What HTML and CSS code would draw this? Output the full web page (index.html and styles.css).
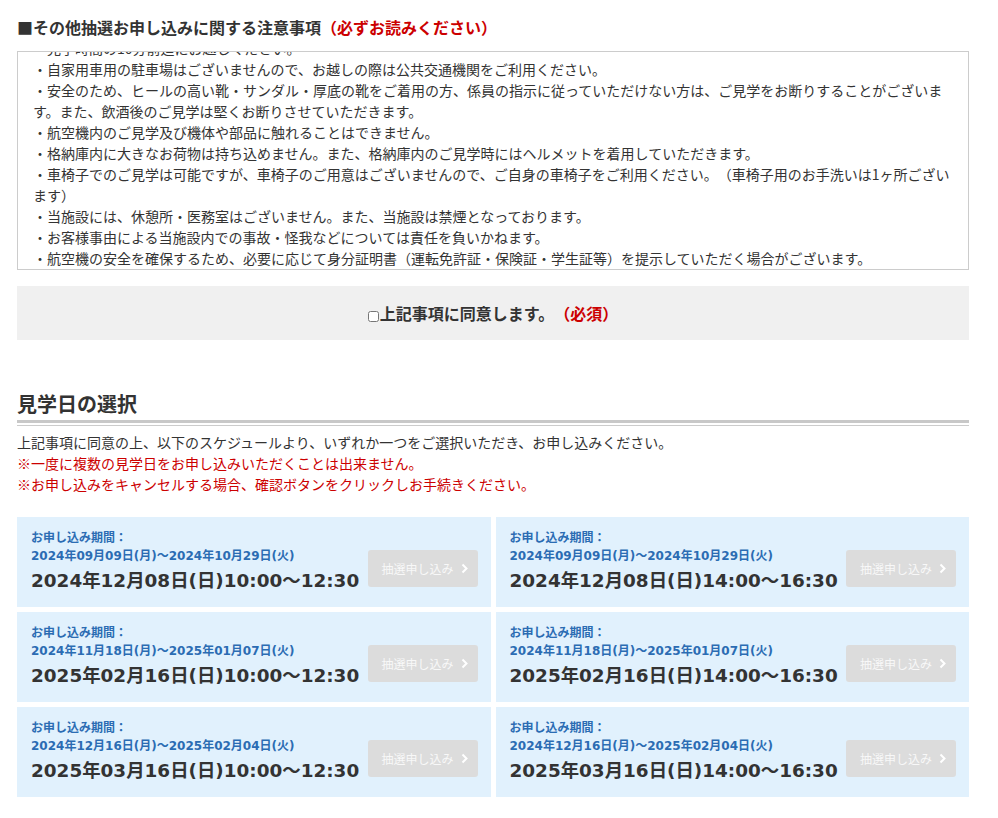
FILE: index.html
```html
<!DOCTYPE html>
<html lang="ja">
<head>
  <meta charset="UTF-8">
  <meta name="viewport" content="width=device-width, initial-scale=1">
  <title>見学日の選択</title>
  <link rel="stylesheet" href="styles.css">
</head>
<body>
  <div class="wrap">
    <h3 class="notice-title">■その他抽選お申し込みに関する注意事項<span class="red">（必ずお読みください）</span></h3>
    <div class="notice-box" id="noticeBox">
      <p>・見学時間の10分前迄にお越しください。</p>
      <p>・自家用車用の駐車場はございませんので、お越しの際は公共交通機関をご利用ください。</p>
      <p>・安全のため、ヒールの高い靴・サンダル・厚底の靴をご着用の方、係員の指示に従っていただけない方は、ご見学をお断りすることがございます。また、飲酒後のご見学は堅くお断りさせていただきます。</p>
      <p>・航空機内のご見学及び機体や部品に触れることはできません。</p>
      <p>・格納庫内に大きなお荷物は持ち込めません。また、格納庫内のご見学時にはヘルメットを着用していただきます。</p>
      <p>・車椅子でのご見学は可能ですが、車椅子のご用意はございませんので、ご自身の車椅子をご利用ください。（車椅子用のお手洗いは1ヶ所ございます）</p>
      <p>・当施設には、休憩所・医務室はございません。また、当施設は禁煙となっております。</p>
      <p>・お客様事由による当施設内での事故・怪我などについては責任を負いかねます。</p>
      <p>・航空機の安全を確保するため、必要に応じて身分証明書（運転免許証・保険証・学生証等）を提示していただく場合がございます。</p>
    </div>

    <div class="agree">
      <label><input type="checkbox" class="agree-check">上記事項に同意します。<span class="red">（必須）</span></label>
    </div>

    <div class="sec-head">
      <h2>見学日の選択</h2>
    </div>
    <p class="lead">
      上記事項に同意の上、以下のスケジュールより、いずれか一つをご選択いただき、お申し込みください。<br>
      <span class="red">※一度に複数の見学日をお申し込みいただくことは出来ません。</span><br>
      <span class="red">※お申し込みをキャンセルする場合、確認ボタンをクリックしお手続きください。</span>
    </p>

    <div class="schedule">
      <div class="card">
        <div class="card-info">
          <div class="period">お申し込み期間：</div>
          <div class="period">2024年09月09日(月)〜2024年10月29日(火)</div>
          <div class="date">2024年12月08日(日)10:00〜12:30</div>
        </div>
        <span class="btn-apply">抽選申し込み<svg width="7" height="11" viewBox="0 0 7 11"><polyline points="1.5,1.5 5.5,5.5 1.5,9.5" fill="none" stroke="#fff" stroke-width="2"/></svg></span>
      </div>
      <div class="card">
        <div class="card-info">
          <div class="period">お申し込み期間：</div>
          <div class="period">2024年09月09日(月)〜2024年10月29日(火)</div>
          <div class="date">2024年12月08日(日)14:00〜16:30</div>
        </div>
        <span class="btn-apply">抽選申し込み<svg width="7" height="11" viewBox="0 0 7 11"><polyline points="1.5,1.5 5.5,5.5 1.5,9.5" fill="none" stroke="#fff" stroke-width="2"/></svg></span>
      </div>
      <div class="card">
        <div class="card-info">
          <div class="period">お申し込み期間：</div>
          <div class="period">2024年11月18日(月)〜2025年01月07日(火)</div>
          <div class="date">2025年02月16日(日)10:00〜12:30</div>
        </div>
        <span class="btn-apply">抽選申し込み<svg width="7" height="11" viewBox="0 0 7 11"><polyline points="1.5,1.5 5.5,5.5 1.5,9.5" fill="none" stroke="#fff" stroke-width="2"/></svg></span>
      </div>
      <div class="card">
        <div class="card-info">
          <div class="period">お申し込み期間：</div>
          <div class="period">2024年11月18日(月)〜2025年01月07日(火)</div>
          <div class="date">2025年02月16日(日)14:00〜16:30</div>
        </div>
        <span class="btn-apply">抽選申し込み<svg width="7" height="11" viewBox="0 0 7 11"><polyline points="1.5,1.5 5.5,5.5 1.5,9.5" fill="none" stroke="#fff" stroke-width="2"/></svg></span>
      </div>
      <div class="card">
        <div class="card-info">
          <div class="period">お申し込み期間：</div>
          <div class="period">2024年12月16日(月)〜2025年02月04日(火)</div>
          <div class="date">2025年03月16日(日)10:00〜12:30</div>
        </div>
        <span class="btn-apply">抽選申し込み<svg width="7" height="11" viewBox="0 0 7 11"><polyline points="1.5,1.5 5.5,5.5 1.5,9.5" fill="none" stroke="#fff" stroke-width="2"/></svg></span>
      </div>
      <div class="card">
        <div class="card-info">
          <div class="period">お申し込み期間：</div>
          <div class="period">2024年12月16日(月)〜2025年02月04日(火)</div>
          <div class="date">2025年03月16日(日)14:00〜16:30</div>
        </div>
        <span class="btn-apply">抽選申し込み<svg width="7" height="11" viewBox="0 0 7 11"><polyline points="1.5,1.5 5.5,5.5 1.5,9.5" fill="none" stroke="#fff" stroke-width="2"/></svg></span>
      </div>
    </div>
  </div>

  <script>
    // 注意事項ボックスは少しスクロールした状態で表示
    document.getElementById('noticeBox').scrollTop = 24;
  </script>
</body>
</html>
```

FILE: styles.css
```css
body {
  font-family: "DejaVu Sans", "Noto Sans CJK JP", sans-serif;
  margin: 0;
  background-color: #fff;
  color: #333;
  text-spacing-trim: space-all;
}

.wrap {
  width: 952px;
  margin-left: 17px;
}

.red {
  color: #cc0000;
}

.notice-title {
  font-family: "Noto Sans CJK JP", sans-serif;
  font-size: 16px;
  line-height: 24px;
  margin: 15px 0 12px;
}

.notice-box {
  height: 219px;
  box-sizing: border-box;
  border: 1px solid #ccc;
  padding: 10px 15px;
  overflow-y: auto;
  scrollbar-width: none;
  font-family: "Noto Sans CJK JP", sans-serif;
  font-size: 14px;
  line-height: 21px;
}

.notice-box::-webkit-scrollbar {
  display: none;
}

.notice-box p {
  margin: 0;
}

.agree {
  margin-top: 16px;
  height: 54px;
  background-color: #f0f0f0;
  display: flex;
  justify-content: center;
  align-items: center;
  font-family: "Noto Sans CJK JP", sans-serif;
  font-size: 16px;
  font-weight: bold;
}

.agree-check {
  width: 11px;
  height: 11px;
  margin: 0 1px 0 0;
  vertical-align: -2px;
}

.sec-head {
  margin-top: 49px;
  padding-bottom: 2px;
  border-bottom: 1px solid #ccc;
}

.sec-head h2 {
  font-family: "Noto Sans CJK JP", sans-serif;
  font-size: 20px;
  line-height: 30px;
  margin: 0;
  padding-bottom: 1px;
  border-bottom: 3px solid #c8c8c8;
}

.lead {
  font-family: "Noto Sans CJK JP", sans-serif;
  font-size: 14px;
  line-height: 21px;
  margin: 6px 0 22px;
}

.schedule {
  display: grid;
  grid-template-columns: 1fr 1fr;
  gap: 5px;
}

.card {
  background-color: #e1f1fd;
  padding: 12px 13px 12px 14px;
  display: flex;
  justify-content: space-between;
}

.period {
  font-size: 12px;
  line-height: 18px;
  font-weight: bold;
  color: #2b6cb3;
}

.date {
  font-size: 18.4px;
  line-height: 28px;
  margin-top: 2px;
  font-weight: bold;
  color: #333;
}

.btn-apply {
  align-self: flex-end;
  margin-bottom: 8px;
  width: 110px;
  height: 37px;
  box-sizing: border-box;
  padding: 0 10px 0 14px;
  background-color: #dcdcdc;
  border-radius: 3px;
  color: #f8f8f8;
  font-family: "Noto Sans CJK JP", sans-serif;
  font-size: 12px;
  display: flex;
  align-items: center;
  justify-content: space-between;
}
```
